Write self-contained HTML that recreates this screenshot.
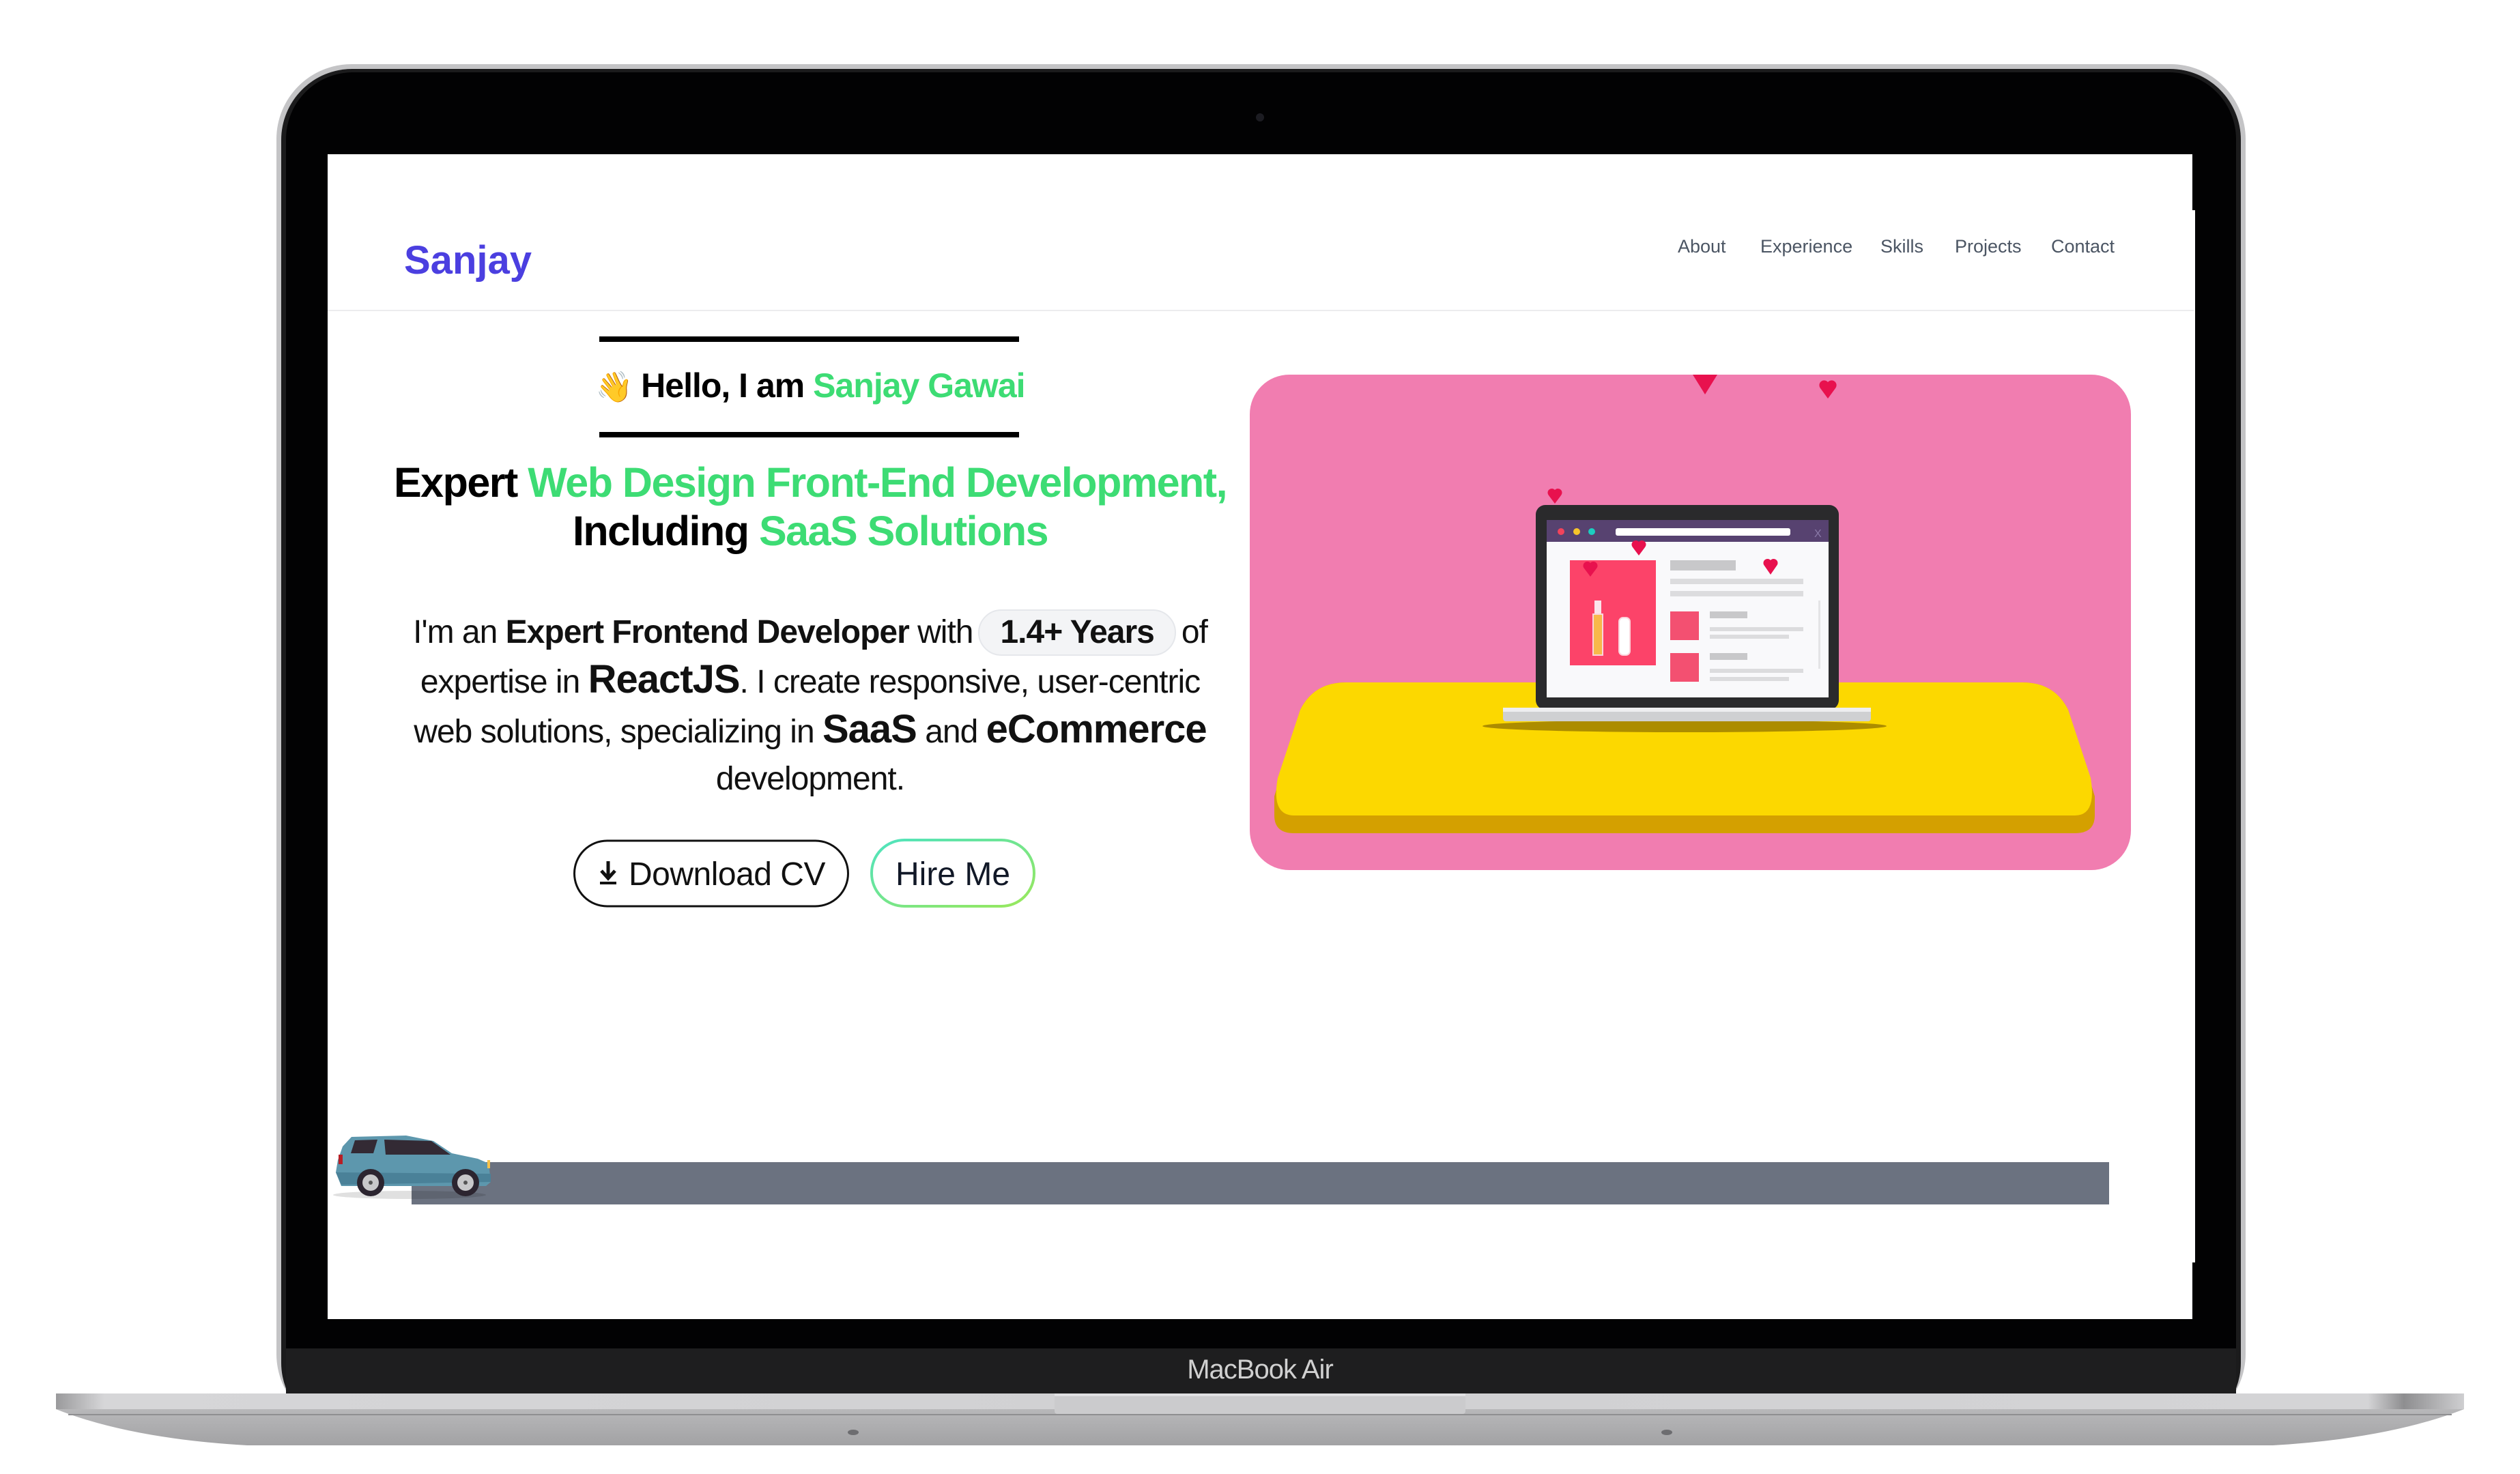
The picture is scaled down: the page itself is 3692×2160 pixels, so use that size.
<!DOCTYPE html>
<html><head><meta charset="utf-8">
<style>
html,body{margin:0;padding:0;background:#fff;}
body{width:3692px;height:2160px;position:relative;overflow:hidden;font-family:"Liberation Sans",Arial,sans-serif;}
.abs{position:absolute;}
.c{position:absolute;left:487px;width:1400px;text-align:center;white-space:nowrap;}
.nav{position:absolute;top:346px;font-size:27px;color:#4b5563;}
.g{color:#3ddc74;}
.pill{display:inline-block;background:#f3f4f6;border:2px solid #e5e7eb;border-radius:34px;padding:0 30px;line-height:64px;margin:0 8px;}
</style></head><body>
<svg class="abs" style="left:0;top:0" width="3692" height="2160" viewBox="0 0 3692 2160">
<defs>
<linearGradient id="base1" x1="0" x2="1" y1="0" y2="0">
<stop offset="0" stop-color="#9a9a9c"/><stop offset="0.02" stop-color="#d6d6d8"/><stop offset="0.5" stop-color="#d0d0d2"/><stop offset="0.96" stop-color="#d4d4d6"/><stop offset="0.975" stop-color="#8e8e90"/><stop offset="1" stop-color="#cfcfd1"/>
</linearGradient>
<linearGradient id="base2" x1="0" x2="0" y1="0" y2="1">
<stop offset="0" stop-color="#b8b8ba"/><stop offset="1" stop-color="#a2a2a4"/>
</linearGradient>
<radialGradient id="shad" cx="0.5" cy="0" r="0.5"><stop offset="0" stop-color="#000" stop-opacity="0.25"/><stop offset="1" stop-color="#000" stop-opacity="0"/></radialGradient>
<linearGradient id="hire" x1="0" y1="0" x2="1" y2="1"><stop offset="0" stop-color="#4ee3c0"/><stop offset="1" stop-color="#9ae85a"/></linearGradient>
</defs>
<ellipse cx="1846" cy="2120" rx="1750" ry="30" fill="url(#shad)"/>
<rect x="405" y="94" width="2885" height="2000" rx="110" fill="#c4c4c6"/>
<rect x="412" y="101" width="2871" height="2000" rx="104" fill="#1b1b1c"/>
<rect x="419" y="106" width="2857" height="2000" rx="98" fill="#020203"/>
<rect x="419" y="1976" width="2857" height="70" fill="#1e1e1f"/>
<circle cx="1846" cy="172" r="6" fill="#1c1c22"/>
<rect x="480" y="226" width="2732" height="1707" fill="#fff"/>
<rect x="3212" y="308" width="4" height="1542" fill="#fff"/>
<path d="M82 2065 L3610 2065 Q3500 2108 3330 2118 L362 2118 Q190 2108 82 2065 Z" fill="url(#base2)"/>
<line x1="100" y1="2073" x2="3592" y2="2073" stroke="#8f8f91" stroke-width="2"/>
<rect x="82" y="2042" width="3528" height="23" fill="url(#base1)"/>
<rect x="1545" y="2042" width="602" height="30" rx="4" fill="#cbcbcd"/>
<rect x="1545" y="2042" width="602" height="4" fill="#e0e0e2"/>
<ellipse cx="1250" cy="2099" rx="8" ry="4" fill="#6d6d70"/>
<ellipse cx="2442" cy="2099" rx="8" ry="4" fill="#6d6d70"/>
<rect x="480" y="454" width="2734" height="2" fill="#ececee"/>
<rect x="878" y="493" width="615" height="8" fill="#000"/>
<rect x="878" y="633" width="615" height="8" fill="#000"/>
<rect x="1831" y="549" width="1291" height="726" rx="58" fill="#f17db0"/>
<path d="M1972 1000 L2963 1000 Q3010 1000 3030 1040 L3069 1167 L3069 1195 Q3069 1221 3040 1221 L1896 1221 Q1867 1221 1867 1195 L1867 1167 L1905 1040 Q1925 1000 1972 1000 Z" fill="#d4a000"/>
<path d="M1972 1000 L2963 1000 Q3010 1000 3030 1040 L3063 1140 Q3072 1195 3040 1195 L1896 1195 Q1862 1195 1872 1140 L1905 1040 Q1925 1000 1972 1000 Z" fill="#fcd800"/>
<ellipse cx="2468" cy="1064" rx="296" ry="9" fill="#ac8c00"/>
<rect x="2250" y="740" width="444" height="300" rx="14" fill="#2a2a2c"/>
<rect x="2266" y="762" width="413" height="260" fill="#f9f9fb"/>
<rect x="2266" y="762" width="413" height="32" fill="#574270"/>
<circle cx="2287" cy="779" r="5" fill="#f2435b"/><circle cx="2310" cy="779" r="5" fill="#f7c52a"/><circle cx="2332" cy="779" r="5" fill="#1ccdc0"/>
<rect x="2367" y="774" width="256" height="11" rx="3" fill="#fff"/>
<text x="2658" y="787" font-size="16" fill="#8a7aa8" font-family="Liberation Sans">X</text>
<rect x="2202" y="1037" width="539" height="20" rx="4" fill="#cfd0d2"/>
<rect x="2202" y="1037" width="539" height="6" fill="#eeeef0"/>
<rect x="2300" y="821" width="126" height="154" fill="#fc4369"/>
<rect x="2336" y="880" width="10" height="20" fill="#fbe3ea"/>
<rect x="2334" y="900" width="14" height="60" fill="#f8b84a" stroke="#fbd4dc" stroke-width="2"/>
<rect x="2372" y="905" width="16" height="55" rx="6" fill="#fff" stroke="#fbd4dc" stroke-width="2"/>
<rect x="2447" y="821" width="96" height="15" fill="#c8c8ca"/>
<rect x="2447" y="848" width="195" height="8" fill="#dcdcde"/>
<rect x="2447" y="866" width="195" height="8" fill="#dcdcde"/>
<rect x="2447" y="896" width="42" height="42" fill="#f35071"/>
<rect x="2447" y="957" width="42" height="42" fill="#f35071"/>
<rect x="2505" y="896" width="55" height="10" fill="#c8c8ca"/>
<rect x="2505" y="919" width="137" height="6" fill="#dcdcde"/>
<rect x="2505" y="930" width="116" height="6" fill="#dcdcde"/>
<rect x="2505" y="957" width="55" height="10" fill="#c8c8ca"/>
<rect x="2505" y="980" width="137" height="6" fill="#dcdcde"/>
<rect x="2505" y="992" width="116" height="6" fill="#dcdcde"/>
<rect x="2664" y="880" width="3" height="100" fill="#e4e4e6"/>
<g fill="#e8114e">
<path d="M2480 549 L2516 549 L2498 578 Z"/>
<path d="M2678 584 L2667 569 A7 7 0 0 1 2678 560 A7 7 0 0 1 2689 569 Z"/>
<path d="M2278 738 L2269 726 A6 6 0 0 1 2278 718 A6 6 0 0 1 2287 726 Z"/>
<path d="M2401 814 L2392 802 A6 6 0 0 1 2401 794 A6 6 0 0 1 2410 802 Z"/>
<path d="M2330 845 L2321 833 A6 6 0 0 1 2330 825 A6 6 0 0 1 2339 833 Z"/>
<path d="M2594 842 L2585 829 A6 6 0 0 1 2594 821 A6 6 0 0 1 2603 829 Z"/>
</g>
<rect x="603" y="1703" width="2487" height="62" fill="#6b7280"/>
<ellipse cx="600" cy="1751" rx="112" ry="6" fill="#000" opacity="0.12"/>
<path d="M492 1718 L495 1700 L502 1680 L515 1666 L595 1664 L635 1672 L662 1690 L700 1698 L716 1705 L719 1732 L712 1738 L500 1738 Z" fill="#5d97ad"/>
<path d="M520 1671 L553 1670 L547 1690 L514 1690 Z M563 1670 L632 1672 L660 1692 L565 1692 Z" fill="#332a34"/>
<path d="M492 1718 L719 1720 L719 1732 L500 1736 Z" fill="#4a8198"/>
<rect x="496" y="1692" width="6" height="14" fill="#b81e25"/>
<rect x="714" y="1700" width="4" height="12" fill="#f5c24a"/>
<circle cx="543" cy="1733" r="20" fill="#2c2530"/><circle cx="543" cy="1733" r="12" fill="#c8c8ca"/><circle cx="543" cy="1733" r="3" fill="#555"/>
<circle cx="682" cy="1733" r="20" fill="#2c2530"/><circle cx="682" cy="1733" r="12" fill="#c8c8ca"/><circle cx="682" cy="1733" r="3" fill="#555"/>
<rect x="841.5" y="1232" width="401" height="96" rx="48" fill="#fff" stroke="#111" stroke-width="3"/>
<rect x="1277" y="1231" width="238" height="97" rx="48" fill="#fff" stroke="url(#hire)" stroke-width="4"/>
<path d="M891 1262 V1286 M881 1276 L891 1287 L901 1276" stroke="#111" stroke-width="5" fill="none"/>
<rect x="879" y="1292" width="24" height="4" fill="#111"/>
</svg>

<div class="abs" style="left:592px;top:348px;font-size:58px;font-weight:bold;color:#4b3fe0;">Sanjay</div>
<div class="nav" style="left:2458px">About</div>
<div class="nav" style="left:2579px">Experience</div>
<div class="nav" style="left:2755px">Skills</div>
<div class="nav" style="left:2864px">Projects</div>
<div class="nav" style="left:3005px">Contact</div>
<div class="c" style="top:536px;font-size:50px;font-weight:bold;letter-spacing:-1px;"><span style="font-size:44px">👋</span> Hello, I am <span class="g">Sanjay Gawai</span></div>
<div class="c" style="top:672px;font-size:61px;font-weight:bold;letter-spacing:-1.5px;line-height:71px;">Expert <span class="g">Web Design Front-End Development,</span><br>Including <span class="g">SaaS Solutions</span></div>
<div class="c" style="top:892px;font-size:48px;line-height:69px;color:#111;letter-spacing:-1px;">I'm an <b>Expert Frontend Developer</b> with<span class="pill"><b>1.4+ Years</b></span>of<br>expertise in <b style="font-size:58px">ReactJS</b>. I create responsive, user-centric<br>web solutions, specializing in <b style="font-size:58px">SaaS</b> and <b style="font-size:58px">eCommerce</b><br>development.</div>
<div class="abs" style="left:921px;top:1254px;font-size:48px;color:#111;letter-spacing:-0.5px;">Download CV</div>
<div class="abs" style="left:1277px;top:1254px;width:238px;text-align:center;font-size:48px;color:#111827;">Hire Me</div>
<div class="abs" style="left:1646px;top:1985px;width:400px;text-align:center;font-size:40px;color:#d0d0d0;letter-spacing:-1px;">MacBook Air</div>
</body></html>
